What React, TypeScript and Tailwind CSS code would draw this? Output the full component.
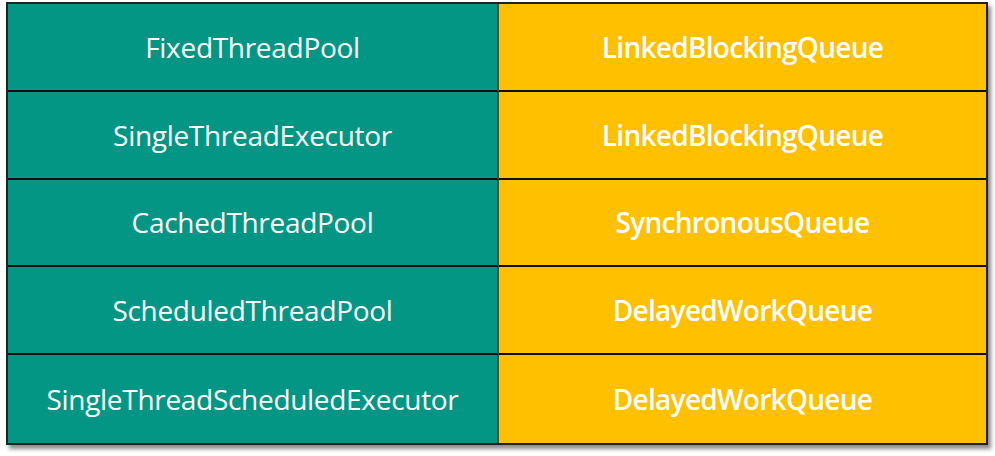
import React from "react";

const rows: [string, string][] = [
  ["FixedThreadPool", "LinkedBlockingQueue"],
  ["SingleThreadExecutor", "LinkedBlockingQueue"],
  ["CachedThreadPool", "SynchronousQueue"],
  ["ScheduledThreadPool", "DelayedWorkQueue"],
  ["SingleThreadScheduledExecutor", "DelayedWorkQueue"],
];

export default function App() {
  return (
    <div className="w-[995px] h-[456px] bg-white pl-[6px] pt-[2px]" style={{ fontFamily: '"Open Sans", "Noto Sans", sans-serif' }}>
      <div className="w-[982px] h-[443px] border-2 border-[#222] grid grid-cols-[491px_1fr] grid-rows-5 shadow-[3px_4px_4px_rgba(0,0,0,0.45)]">
        {rows.map(([a, b], i) => (
          <React.Fragment key={i}>
            <div className={`bg-[#039684] flex items-center justify-center text-white text-[28px] tracking-[-0.3px] border-r-2 border-[#5a4a20] ${i < 4 ? "border-b-2 border-b-[#111]" : ""}`}>
              {a}
            </div>
            <div className={`bg-[#ffc000] flex items-center justify-center text-white text-[28px] tracking-[-0.7px] font-semibold ${i < 4 ? "border-b-2 border-b-[#111]" : ""}`}>
              {b}
            </div>
          </React.Fragment>
        ))}
      </div>
    </div>
  );
}
